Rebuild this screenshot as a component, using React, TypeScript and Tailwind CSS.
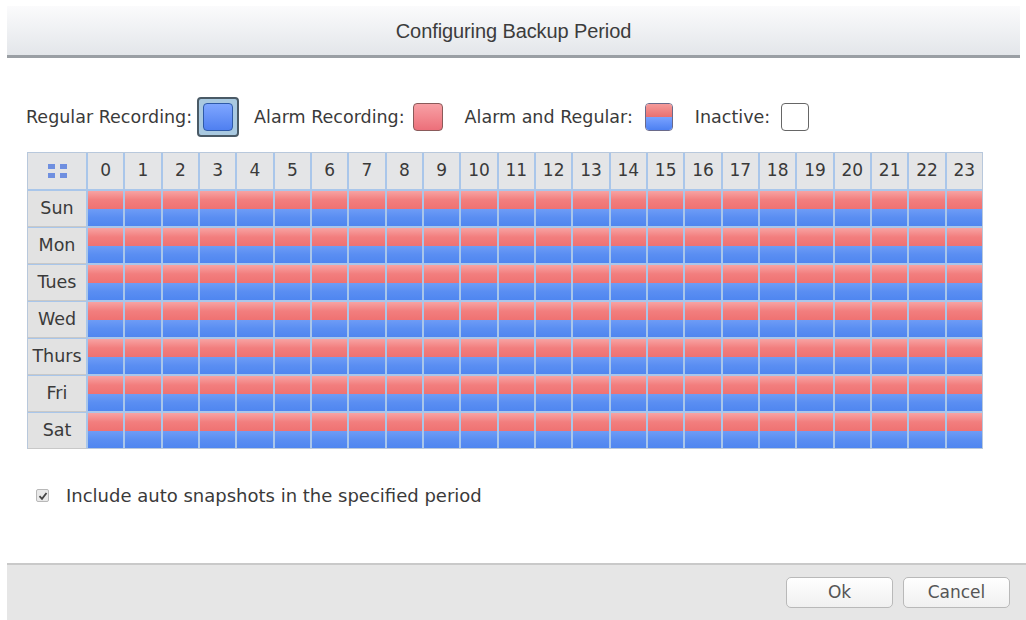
import React from "react";

const days = ["Sun", "Mon", "Tues", "Wed", "Thurs", "Fri", "Sat"];
const hours = Array.from({ length: 24 }, (_, i) => i);

function Swatch({ kind }: { kind: "blue" | "red" | "both" | "none" }) {
  if (kind === "blue") {
    return (
      <div className="w-[42px] h-[40px] rounded-[4px] border-2 border-[#4a5a66] bg-[#a9c9e0] flex items-center justify-center">
        <div className="w-[30px] h-[28px] rounded-[4px] border border-[#2e5aa8] bg-gradient-to-b from-[#7fa6ff] to-[#4f7ff0]" />
      </div>
    );
  }
  if (kind === "red") {
    return <div className="w-[30px] h-[28px] rounded-[4px] border border-[#8a5a5a] bg-gradient-to-b from-[#f7a0a5] to-[#ec6f7a]" />;
  }
  if (kind === "both") {
    return (
      <div className="w-[28px] h-[28px] rounded-[4px] border border-[#6a6a8a] overflow-hidden flex flex-col">
        <div className="h-1/2 bg-gradient-to-b from-[#f49a9a] to-[#ea7070]" />
        <div className="h-1/2 bg-gradient-to-b from-[#7aa2ff] to-[#4c80f2]" />
      </div>
    );
  }
  return <div className="w-[28px] h-[28px] rounded-[4px] border border-[#666] bg-white" />;
}

function Cell() {
  return (
    <div className="flex flex-col h-[35px]">
      <div className="h-1/2 bg-gradient-to-b from-[#f7a3a3] via-[#f27e7e] to-[#ef7272]" />
      <div className="h-1/2 bg-gradient-to-b from-[#6e9cf6] via-[#5a8ef2] to-[#4f86f0]" />
    </div>
  );
}

export default function App() {
  return (
    <div
      className="w-[1026px] h-[620px] bg-white flex flex-col text-[#3a3a3a] overflow-hidden"
      style={{ fontFamily: '"DejaVu Sans", Verdana, sans-serif' }}
    >
      {/* title bar */}
      <div className="mt-[6px] ml-[7px] mr-[6px] h-[52px] bg-gradient-to-b from-[#fbfbfc] to-[#e3e6ea] border-b-[3px] border-[#9a9fa4] flex items-center justify-center">
        <span
          className="text-[20px] text-[#3c3c3c] tracking-[-0.1px]"
          style={{ fontFamily: '"Liberation Sans", Arial, sans-serif' }}
        >
          Configuring Backup Period
        </span>
      </div>

      {/* legend */}
      <div className="mt-[38px] ml-[26px] flex items-center text-[17.5px] h-[42px]">
        <span>Regular Recording:</span>
        <div className="ml-[5px]">
          <Swatch kind="blue" />
        </div>
        <span className="ml-[15px]">Alarm Recording:</span>
        <div className="ml-[8px]">
          <Swatch kind="red" />
        </div>
        <span className="ml-[22px]">Alarm and Regular:</span>
        <div className="ml-[12px]">
          <Swatch kind="both" />
        </div>
        <span className="ml-[22px]">Inactive:</span>
        <div className="ml-[11px]">
          <Swatch kind="none" />
        </div>
      </div>

      {/* grid */}
      <div className="mt-[14px] ml-[27px] w-[956px] border border-[#b8c8dc] bg-[#a9c6ea]">
        <div
          className="grid gap-[2px]"
          style={{ gridTemplateColumns: "58px repeat(24, 1fr)" }}
        >
          <div className="h-[36px] bg-[#e3e4e6] flex items-center justify-center">
            <div className="grid grid-cols-2 gap-x-[5px] gap-y-[4px]">
              <div className="w-[7px] h-[5px] bg-[#6f8fe0]" />
              <div className="w-[7px] h-[5px] bg-[#6f8fe0]" />
              <div className="w-[7px] h-[5px] bg-[#6f8fe0]" />
              <div className="w-[7px] h-[5px] bg-[#6f8fe0]" />
            </div>
          </div>
          {hours.map((h) => (
            <div key={h} className="h-[36px] bg-[#e4e5e7] flex items-center justify-center text-[17px] text-[#3a3a3a]">
              {h}
            </div>
          ))}
          {days.map((d) => (
            <React.Fragment key={d}>
              <div className="h-[35px] bg-[#e2e2e2] flex items-center justify-center text-[17.5px] text-[#3a3a3a] shadow-[0_1px_0_#c8c8c8]">
                {d}
              </div>
              {hours.map((h) => (
                <Cell key={h} />
              ))}
            </React.Fragment>
          ))}
        </div>
      </div>

      {/* checkbox */}
      <div className="mt-[33px] ml-[36px] flex items-center text-[18px]">
        <div className="w-[13px] h-[13px] rounded-[2px] border border-[#b8b8b8] bg-[#e9e9e9] flex items-center justify-center">
          <svg width="10" height="10" viewBox="0 0 10 10">
            <path d="M1.5 5.2 L4 7.8 L8.5 2" stroke="#444" strokeWidth="1.8" fill="none" />
          </svg>
        </div>
        <span className="ml-[17px]">Include auto snapshots in the specified period</span>
      </div>

      <div className="flex-1" />

      {/* footer */}
      <div className="ml-[7px] h-[57px] bg-[#e6e6e6] border-t-2 border-[#c9c9c9] flex items-center justify-end pr-[16px] gap-[10px]">
        <button className="w-[107px] h-[31px] rounded-[5px] border border-[#b9b9b9] bg-gradient-to-b from-white to-[#f0f0f0] text-[17px] text-[#555]">
          Ok
        </button>
        <button className="w-[107px] h-[31px] rounded-[5px] border border-[#b9b9b9] bg-gradient-to-b from-white to-[#f0f0f0] text-[17px] text-[#555]">
          Cancel
        </button>
      </div>
    </div>
  );
}
